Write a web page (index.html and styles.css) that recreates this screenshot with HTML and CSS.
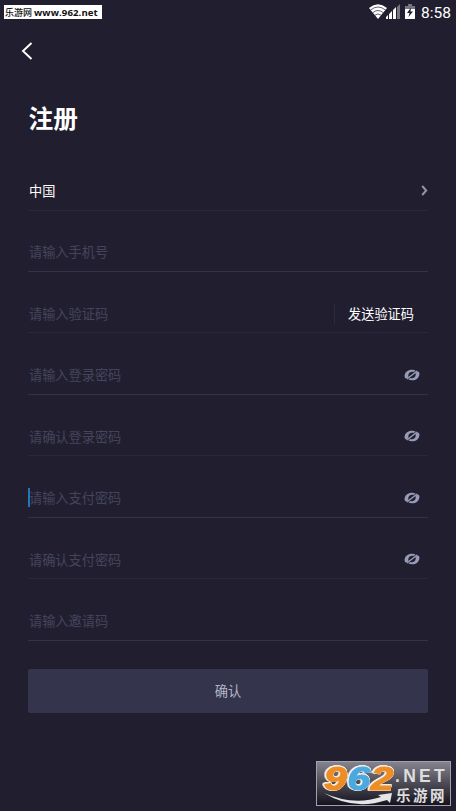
FILE: index.html
```html
<!DOCTYPE html>
<html lang="zh-CN">
<head>
<meta charset="utf-8">
<title>注册</title>
<link rel="stylesheet" href="styles.css">
</head>
<body>
<svg class="defs" aria-hidden="true">
  <defs>
    <symbol id="eye-off" viewBox="0 0 16 14">
      <path d="M.5 8.300C.8 4 4 1.700 8 1.700c1.500 0 2.700.3 3.600.8L9.800 4C7 3.300 4.500 4.500 4.300 7.200c0 .7.100 1.200.3 1.700L2.200 10.700Q.6 10 .5 8.300z" fill="#969bb7"/>
      <path d="M15.500 5.700C15.200 10 12 12.300 8 12.300c-1.500 0-2.700-.3-3.600-.8L6.200 10c2.800.7 5.300-.5 5.500-3.200 0-.7-.1-1.200-.3-1.700l2.400-1.800q1.600.7 1.700 2.400z" fill="#969bb7"/>
      <path d="M3 11 13 3" stroke="#969bb7" stroke-width="1.500"/>
    </symbol>
  </defs>
</svg>
<header class="status">
  <span class="source">乐游网 <b>www.962.net</b></span>
  <div class="system">
    <svg class="wifi" width="18" height="15" viewBox="0 0 18 15">
      <path d="M0 4Q9-3.400 18 4L9 15z" fill="#fff"/>
      <path d="M1.500 6Q9 0 16.500 6M3.700 8.700Q9 4.400 14.300 8.700M5.800 11.200Q9 8.700 12.200 11.200" fill="none" stroke="#211f2f" stroke-width=".7"/>
    </svg>
    <svg class="signal" width="15" height="15" viewBox="0 0 15 15">
      <path d="M0 15v-2l2-2v4zM3 15v-5l3-3v8zM7 15V6l3-3v12z" fill="#fff"/>
      <path d="M11 15V3l3-3v15z" fill="#77757f"/>
    </svg>
    <svg class="battery" width="10" height="15" viewBox="0 0 10 15">
      <path d="M0 2h3V0h4v2h3v4H0z" fill="#77757f"/>
      <path d="M0 5h10v10H0z" fill="#fff"/>
      <path d="M6 3.500 2 9h2.500L3.500 13 8 7.500H5.500z" fill="#211f2f"/>
    </svg>
    <span class="time">8:58</span>
  </div>
</header>
<nav class="nav">
  <svg width="12" height="18" viewBox="0 0 12 18"><path d="M10.500 1 2 9l8.500 8" fill="none" stroke="#fff" stroke-width="1.900"/></svg>
</nav>
<main class="page">
  <h1 class="title">注册</h1>
  <form class="form">
    <div class="row faint"><span class="country">中国</span>
      <svg class="chevron" width="7" height="11" viewBox="0 0 7 11"><path d="m1.200 1 4 4.500-4 4.500" fill="none" stroke="#9693a3" stroke-width="2"/></svg>
    </div>
    <div class="row"><span>请输入手机号</span></div>
    <div class="row faint"><span>请输入验证码</span><span class="send">发送验证码</span></div>
    <div class="row"><span>请输入登录密码</span><svg class="eye"><use href="#eye-off"/></svg></div>
    <div class="row faint"><span>请确认登录密码</span><svg class="eye"><use href="#eye-off"/></svg></div>
    <div class="row"><span class="focused">请输入支付密码</span><svg class="eye"><use href="#eye-off"/></svg></div>
    <div class="row faint"><span>请确认支付密码</span><svg class="eye"><use href="#eye-off"/></svg></div>
    <div class="row"><span>请输入邀请码</span></div>
    <button class="submit" type="button">确认</button>
  </form>
</main>
<aside class="brand">
  <svg class="swoosh" width="133" height="43" viewBox="0 0 133 43">
    <path d="M7 31Q36 44 64 35l-3-2 14-2-2 10-3-3Q36 49 7 31z" fill="#e5e5e8"/>
  </svg>
  <span class="digits"><i class="orange">9</i><i class="blue">6</i><i class="orange">2</i></span>
  <span class="names"><span class="net">.NET</span><span class="site">乐游网</span></span>
</aside>
</body>
</html>
```

FILE: styles.css
```css
* { box-sizing: border-box; }
body {
  margin: 0;
  height: 811px;
  overflow: hidden;
  position: relative;
  background: #211f2f;
  color: #fff;
  font: 13.2px/20px "Noto Sans CJK SC", sans-serif;
}
.defs { position: absolute; width: 0; height: 0; }
.status {
  height: 24px;
  padding: 5px 5px 0 4px;
  display: flex;
  justify-content: space-between;
  align-items: flex-start;
}
.source {
  width: 98px;
  height: 14px;
  padding-left: 1px;
  background: #fff;
  color: #111;
  font: 500 9px/15px "Noto Sans CJK SC", sans-serif;
  white-space: nowrap;
}
.source b { font: 700 9.600px/14px "Open Sans", sans-serif; letter-spacing: .1px; }
.system { display: flex; align-items: flex-start; }
.wifi { margin-top: -1px; }
.signal { margin-left: -1px; margin-top: -1px; }
.battery { margin-left: 4px; margin-top: -1px; }
.time { margin-left: 6px; font: 15.5px/16px Roboto, sans-serif; }
.nav { height: 56px; padding: 18px 21px; }
.nav svg { display: block; }
.page { padding: 19px 28px 0; }
.title {
  margin: 0 0 14.200px;
  padding-left: .5px;
  font-size: 24.700px;
  line-height: 37px;
  margin-bottom: 13.200px;
  font-weight: 700;
}
.row {
  height: 61.430px;
  padding: 23.300px 0 0 1px;
  display: flex;
  align-items: center;
  justify-content: space-between;
  border-bottom: 1px solid #343249;
  color: #45445d;
}
.faint { border-bottom-color: #2a283a; }
.country { color: #fff; }
.chevron { margin-top: -2px; }
.send {
  padding: 0 14px 0 13px;
  border-left: 1px solid #2d2b3d;
  color: #fff;
}
.eye { width: 16px; height: 14px; margin: -1px 8px 0 0; }
.focused { position: relative; }
.focused::before {
  content: "";
  position: absolute;
  left: -1px;
  top: 0;
  width: 2px;
  height: 19px;
  background: #2377b5;
}
.submit {
  display: block;
  width: 100%;
  height: 44px;
  margin-top: 28.400px;
  padding: 1px 0 0;
  border: 0;
  border-radius: 2px;
  background: #34354c;
  color: #b8b7ca;
  font: inherit;
}
.brand {
  position: absolute;
  left: 316px;
  top: 761px;
  width: 135px;
  height: 45px;
  border: 1px solid #a3a2aa;
  background: linear-gradient(#85848e, #4b4a55 50%, #15141e);
  display: flex;
}
.swoosh { position: absolute; left: 0; top: 0; }
.digits {
  position: relative;
  flex: none;
  width: 57px;
  margin: 0 14px 0 7px;
  font: italic 700 33px/34px "Liberation Sans", sans-serif;
  letter-spacing: 0.5px;
  white-space: nowrap;
  transform: scaleX(1.24);
  transform-origin: left;
  -webkit-text-stroke: 1.2px currentColor;
  filter: drop-shadow(.7px 0 0 #f4eee8) drop-shadow(-.7px 0 0 #f4eee8) drop-shadow(0 .7px 0 #f4eee8) drop-shadow(0 -.7px 0 #f4eee8);
}
.orange { color: #ed8d25; -webkit-text-stroke-color: #ed8d25; }
.blue { color: #4aa9df; -webkit-text-stroke-color: #4aa9df; }
.names { position: relative; display: flex; flex-direction: column; color: #dededf; }
.net {
  padding-top: 5px;
  font: 700 17.500px/18px "Liberation Sans", sans-serif;
  letter-spacing: 3.300px;
}
.site { padding-left: 1px; font-size: 14.500px; line-height: 20px; font-weight: 700; letter-spacing: 2.500px; }
```
